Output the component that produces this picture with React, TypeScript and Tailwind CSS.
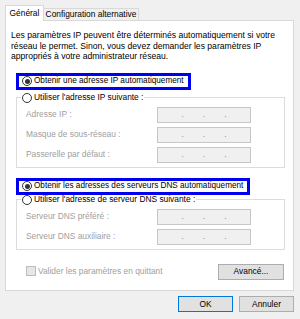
import React from "react";

function Radio({ checked }: { checked?: boolean }) {
  return (
    <span className="flex h-[10px] w-[10px] shrink-0 items-center justify-center rounded-full border border-[#333333] bg-white">
      {checked && <span className="h-[5px] w-[5px] rounded-full bg-[#333333]" />}
    </span>
  );
}

function IpField() {
  return (
    <div className="flex h-[16px] w-[94px] items-center justify-center gap-[19px] border border-[#c6c6c6] bg-[#f0f0f0] text-[#8a8a8a]">
      <span>.</span>
      <span>.</span>
      <span>.</span>
    </div>
  );
}

function FieldRow({ label }: { label: string }) {
  return (
    <div className="flex h-[16px] items-center">
      <span className="w-[131px] text-[#a0a0a0]">{label}</span>
      <IpField />
    </div>
  );
}

function Group({ legend, fields }: { legend: string; fields: string[] }) {
  return (
    <div className="ml-[10px] w-[269px] border border-[#dcdcdc] pb-[4px]">
      <div className="-mt-[5px] ml-[4px] flex h-[10px] w-fit items-center gap-[2px] bg-white px-[1px]">
        <Radio />
        <span>{legend}</span>
      </div>
      <div className="mt-[4px] flex flex-col gap-[4px] pl-[9px]">
        {fields.map((f) => (
          <FieldRow key={f} label={f} />
        ))}
      </div>
    </div>
  );
}

function AutoOption({ label, width }: { label: string; width: string }) {
  return (
    <div className={`ml-[10px] flex h-[17px] items-center gap-[2px] border-[3px] border-[#0000f0] pl-[3px] ${width}`}>
      <Radio checked />
      <span className="whitespace-nowrap text-[8.2px]">{label}</span>
    </div>
  );
}

export default function App() {
  return (
    <div className="h-[319px] w-[300px] overflow-hidden whitespace-nowrap bg-[#f0f0f0] font-['Liberation_Sans',Arial,sans-serif] text-[8.4px] text-black">
      {/* tabs */}
      <div className="ml-[5px] flex h-[20px] items-end pt-[5px]">
        <div className="relative z-10 -mb-[1px] flex h-[16px] w-[39px] items-center justify-center border border-b-0 border-[#d9d9d9] bg-white">
          Général
        </div>
        <div className="flex h-[12px] w-[95px] items-center justify-center border border-b-0 border-l-0 border-[#d9d9d9] bg-[#f0f0f0]">
          Configuration alternative
        </div>
      </div>

      {/* panel */}
      <div className="ml-[5px] h-[271px] w-[289px] border border-[#d9d9d9] bg-white">
        <p className="ml-[5px] mt-[9px] text-[8.6px] leading-[10.5px]">
          Les paramètres IP peuvent être déterminés automatiquement si votre
          <br />
          réseau le permet. Sinon, vous devez demander les paramètres IP
          <br />
          appropriés à votre administrateur réseau.
        </p>

        <div className="mt-[11px]">
          <AutoOption label="Obtenir une adresse IP automatiquement" width="w-[175px]" />
        </div>
        <div className="mt-[7px]">
          <Group
            legend="Utiliser l'adresse IP suivante :"
            fields={["Adresse IP :", "Masque de sous-réseau :", "Passerelle par défaut :"]}
          />
        </div>

        <div className="mt-[10px]">
          <AutoOption label="Obtenir les adresses des serveurs DNS automatiquement" width="w-[234px]" />
        </div>
        <div className="mt-[4px]">
          <Group
            legend="Utiliser l'adresse de serveur DNS suivante :"
            fields={["Serveur DNS préféré :", "Serveur DNS auxiliaire :"]}
          />
        </div>

        <div className="mt-[14px] flex h-[16px] items-center justify-between pl-[20px] pr-[9px]">
          <div className="flex items-center gap-[2px] text-[#a0a0a0]">
            <span className="h-[10px] w-[10px] border border-[#bcbcbc] bg-[#e6e6e6]" />
            <span>Valider les paramètres en quittant</span>
          </div>
          <button className="flex h-[16px] w-[66px] items-center justify-center border border-[#adadad] bg-[#e1e1e1]">
            Avancé...
          </button>
        </div>
      </div>

      {/* dialog buttons */}
      <div className="ml-[5px] mt-[5px] flex w-[289px] justify-end gap-[6px]">
        <button className="flex h-[16px] w-[55px] items-center justify-center border border-[#0078d7] bg-[#e1e1e1]">
          OK
        </button>
        <button className="flex h-[16px] w-[55px] items-center justify-center border border-[#adadad] bg-[#e1e1e1]">
          Annuler
        </button>
      </div>
    </div>
  );
}
